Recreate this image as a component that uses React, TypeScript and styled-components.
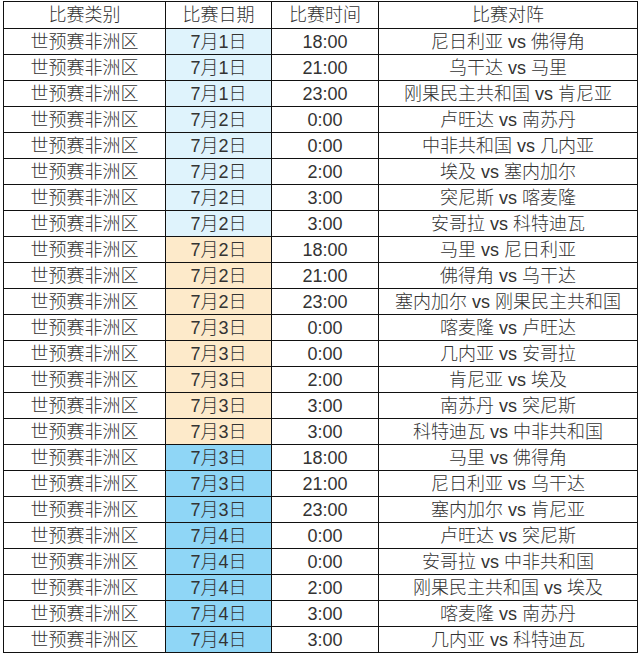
import React from "react";
import styled, { createGlobalStyle } from "styled-components";

type Match = {
  date: string;
  time: string;
  teams: string;
  tone: "light" | "peach" | "sky";
};

const TONES = {
  light: "#dff3fc",
  peach: "#fdeaca",
  sky: "#8fd6f6",
};

const MATCHES: Match[] = [
  { date: "7月1日", time: "18:00", teams: "尼日利亚 vs 佛得角", tone: "light" },
  { date: "7月1日", time: "21:00", teams: "乌干达 vs 马里", tone: "light" },
  { date: "7月1日", time: "23:00", teams: "刚果民主共和国 vs 肯尼亚", tone: "light" },
  { date: "7月2日", time: "0:00", teams: "卢旺达 vs 南苏丹", tone: "light" },
  { date: "7月2日", time: "0:00", teams: "中非共和国 vs 几内亚", tone: "light" },
  { date: "7月2日", time: "2:00", teams: "埃及 vs 塞内加尔", tone: "light" },
  { date: "7月2日", time: "3:00", teams: "突尼斯 vs 喀麦隆", tone: "light" },
  { date: "7月2日", time: "3:00", teams: "安哥拉 vs 科特迪瓦", tone: "light" },
  { date: "7月2日", time: "18:00", teams: "马里 vs 尼日利亚", tone: "peach" },
  { date: "7月2日", time: "21:00", teams: "佛得角 vs 乌干达", tone: "peach" },
  { date: "7月2日", time: "23:00", teams: "塞内加尔 vs 刚果民主共和国", tone: "peach" },
  { date: "7月3日", time: "0:00", teams: "喀麦隆 vs 卢旺达", tone: "peach" },
  { date: "7月3日", time: "0:00", teams: "几内亚 vs 安哥拉", tone: "peach" },
  { date: "7月3日", time: "2:00", teams: "肯尼亚 vs 埃及", tone: "peach" },
  { date: "7月3日", time: "3:00", teams: "南苏丹 vs 突尼斯", tone: "peach" },
  { date: "7月3日", time: "3:00", teams: "科特迪瓦 vs 中非共和国", tone: "peach" },
  { date: "7月3日", time: "18:00", teams: "马里 vs 佛得角", tone: "sky" },
  { date: "7月3日", time: "21:00", teams: "尼日利亚 vs 乌干达", tone: "sky" },
  { date: "7月3日", time: "23:00", teams: "塞内加尔 vs 肯尼亚", tone: "sky" },
  { date: "7月4日", time: "0:00", teams: "卢旺达 vs 突尼斯", tone: "sky" },
  { date: "7月4日", time: "0:00", teams: "安哥拉 vs 中非共和国", tone: "sky" },
  { date: "7月4日", time: "2:00", teams: "刚果民主共和国 vs 埃及", tone: "sky" },
  { date: "7月4日", time: "3:00", teams: "喀麦隆 vs 南苏丹", tone: "sky" },
  { date: "7月4日", time: "3:00", teams: "几内亚 vs 科特迪瓦", tone: "sky" },
];

const GlobalStyle = createGlobalStyle`
  html, body {
    margin: 0;
    padding: 0;
    background: #ffffff;
  }
  body {
    font-family: "Liberation Sans", "Noto Sans CJK SC", sans-serif;
  }
`;

const Page = styled.div`
  padding: 1px 0 0 3px;
`;

const Table = styled.table`
  border-collapse: collapse;
  table-layout: fixed;
  width: 634px;
  color: #333333;
  font-size: 18px;
  font-weight: 300;
`;

const HeadRow = styled.tr`
  height: 27px;
`;

const Row = styled.tr`
  height: 26px;
`;

const Cell = styled.td<{ $bg?: string }>`
  border: 1px solid #111;
  padding: 0;
  text-align: center;
  vertical-align: middle;
  line-height: 24px;
  white-space: nowrap;
  background: ${({ $bg }) => $bg || "#ffffff"};
`;

const HeadCell = styled(Cell).attrs({ as: "th" })`
  font-weight: 300;
`;

export default function App() {
  return (
    <>
      <GlobalStyle />
      <Page>
        <Table>
          <colgroup>
            <col style={{ width: 162 }} />
            <col style={{ width: 106 }} />
            <col style={{ width: 107 }} />
            <col style={{ width: 259 }} />
          </colgroup>
          <thead>
            <HeadRow>
              <HeadCell>比赛类别</HeadCell>
              <HeadCell>比赛日期</HeadCell>
              <HeadCell>比赛时间</HeadCell>
              <HeadCell>比赛对阵</HeadCell>
            </HeadRow>
          </thead>
          <tbody>
            {MATCHES.map((m, i) => (
              <Row key={i}>
                <Cell>世预赛非洲区</Cell>
                <Cell $bg={TONES[m.tone]}>{m.date}</Cell>
                <Cell>{m.time}</Cell>
                <Cell>{m.teams}</Cell>
              </Row>
            ))}
          </tbody>
        </Table>
      </Page>
    </>
  );
}
